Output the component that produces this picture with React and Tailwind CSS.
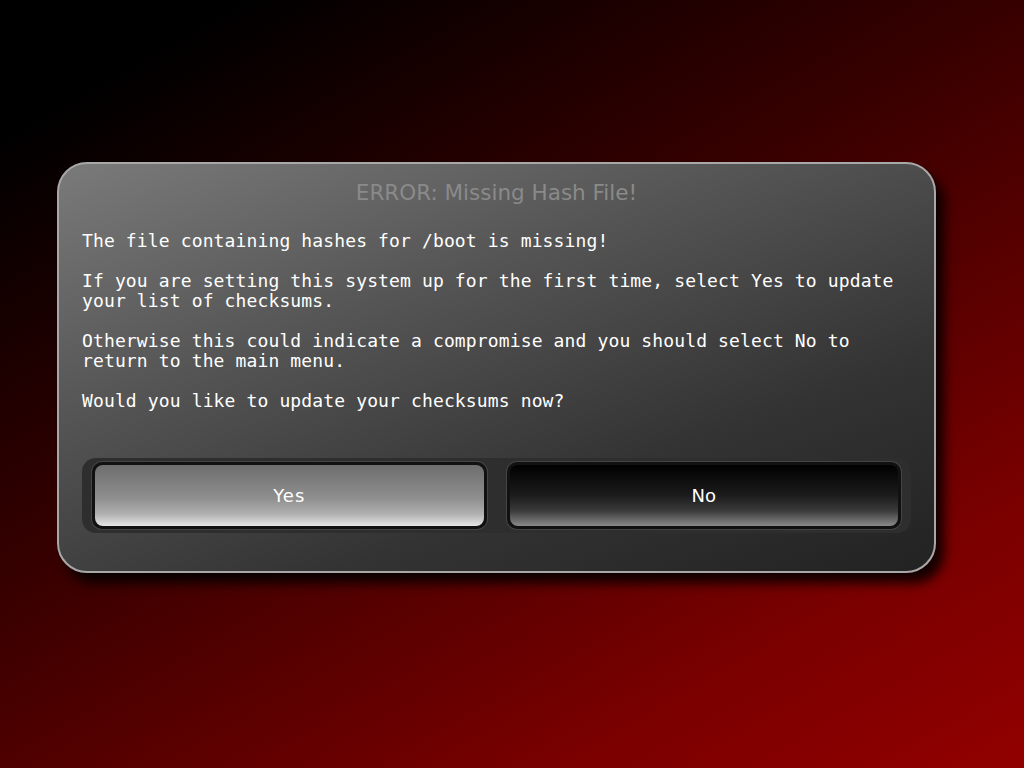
import React from 'react';

const mono = { fontFamily: '"DejaVu Sans Mono", "Liberation Mono", monospace' };

const Button = ({ label, active }) => (
  <div className="flex-1 rounded-[10px] bg-[#111] p-[3px] shadow-[0_0_0_1px_#444]">
    <div
      className={`h-[61px] rounded-[8px] flex items-center justify-center text-white text-[18px] ${
        active
          ? 'bg-[linear-gradient(to_bottom,#6e6e6e_0%,#8f8f8f_55%,#b0b0b0_80%,#e6e6e6_100%)]'
          : 'bg-[linear-gradient(to_bottom,#000_0%,#1c1c1c_50%,#3a3a3a_75%,#8a8a8a_100%)]'
      }`}
      style={{ fontFamily: '"DejaVu Sans", sans-serif', letterSpacing: active ? '1px' : '0' }}
    >
      {label}
    </div>
  </div>
);

export default function App() {
  return (
    <div className="w-[1024px] h-[768px] overflow-hidden bg-[linear-gradient(150deg,#000_10%,#3a0000_45%,#7a0000_80%,#920000_100%)] pt-[162px] pl-[57px]">
      <div className="w-[879px] h-[411px] rounded-[30px] border-2 border-[#a8a8a8] bg-[linear-gradient(160deg,#7a7a7a_0%,#555_35%,#333_70%,#222_100%)] shadow-[8px_10px_12px_rgba(0,0,0,0.85)] flex flex-col px-[23px]">
        <div
          className="text-center text-[#8a8a8a] text-[21.5px] mt-[13px] h-[30px]"
          style={{ fontFamily: '"DejaVu Sans", sans-serif' }}
        >
          ERROR: Missing Hash File!
        </div>
        <div className="text-white text-[18px] leading-[20px] tracking-[0.13px] mt-[24px] flex flex-col gap-[20px]" style={mono}>
          <p>The file containing hashes for /boot is missing!</p>
          <p>
            If you are setting this system up for the first time, select Yes to update
            <br />
            your list of checksums.
          </p>
          <p>
            Otherwise this could indicate a compromise and you should select No to
            <br />
            return to the main menu.
          </p>
          <p>Would you like to update your checksums now?</p>
        </div>
        <div className="mt-[47px] h-[75px] rounded-[14px] bg-[#2e2e2e] flex items-center gap-[20px] px-[10px]">
          <Button label="Yes" active />
          <Button label="No" />
        </div>
      </div>
    </div>
  );
}
